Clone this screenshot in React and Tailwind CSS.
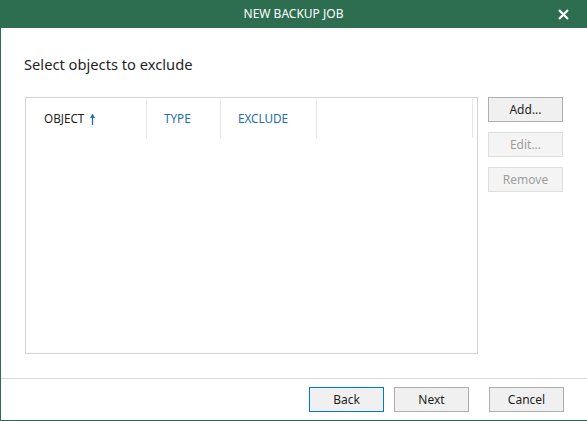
const font = { fontFamily: '"Noto Sans", "Open Sans", sans-serif' };

const btn =
  "flex h-[25px] w-[75px] items-center justify-center border text-[12px] leading-none";

function SortArrow() {
  return (
    <svg width="7" height="12" viewBox="0 0 7 12" className="ml-[5px]">
      <path d="M3.5 1.5 V12" stroke="#1c6db5" strokeWidth="1.3" />
      <path d="M1 5 L3.5 0.8 L6 5 Z" fill="#1c6db5" />
    </svg>
  );
}

export default function App() {
  return (
    <div
      className="flex h-[421px] w-[587px] flex-col bg-white font-['Noto_Sans',sans-serif] text-[#1f1f1f]"
      style={font}
    >
      <div className="relative flex h-[28px] shrink-0 items-center justify-center bg-[#2c6e4f] text-[12px] text-white">
        <span>NEW BACKUP JOB</span>
        <svg
          width="11"
          height="11"
          viewBox="0 0 11 11"
          className="absolute right-[18px] top-[9px]"
        >
          <path d="M1 1 L10 10 M10 1 L1 10" stroke="#fff" strokeWidth="2.2" />
        </svg>
      </div>

      <div className="flex flex-1 flex-col border-b border-l border-[#2c6e4f]">
        <h1 className="ml-[23px] mt-[25px] h-[22px] text-[14.7px] font-normal leading-[22px]">
          Select objects to exclude
        </h1>

        <div className="ml-[24px] mt-[22px] flex gap-[10px]">
          <div className="h-[257px] w-[453px] border border-[#d4d4d4]">
            <div className="mt-px flex h-[39px] text-[11.7px]">
              <div className="flex w-[121px] items-center border-r border-[#e3e8ee] pl-[18px]">
                OBJECT
                <SortArrow />
              </div>
              <div className="flex w-[74px] items-center border-r border-[#e3e8ee] pl-[17px] text-[#1c6db5]">
                TYPE
              </div>
              <div className="flex w-[96px] items-center border-r border-[#e3e8ee] pl-[17px] text-[#1c6db5]">
                EXCLUDE
              </div>
              <div className="w-[156px] border-r border-[#e3e8ee]" />
            </div>
          </div>

          <div className="flex flex-col gap-[10px]">
            <button className={`${btn} border-[#adadad] bg-[#f0f0f0] text-[#1f1f1f]`}>
              Add...
            </button>
            <button className={`${btn} border-[#dedede] bg-[#f4f4f4] text-[#9e9e9e]`}>
              Edit...
            </button>
            <button className={`${btn} border-[#dedede] bg-[#f4f4f4] text-[#9e9e9e]`}>
              Remove
            </button>
          </div>
        </div>

        <div className="mt-auto flex h-[42px] justify-end gap-[10px] border-t border-[#d9d9d9] pr-[23px] pt-[8px]">
          <button className={`${btn} border-[#0078d7] bg-[#f0f0f0]`}>Back</button>
          <button className={`${btn} mr-[10px] border-[#adadad] bg-[#f0f0f0]`}>Next</button>
          <button className={`${btn} border-[#adadad] bg-[#f0f0f0]`}>Cancel</button>
        </div>
      </div>
    </div>
  );
}
